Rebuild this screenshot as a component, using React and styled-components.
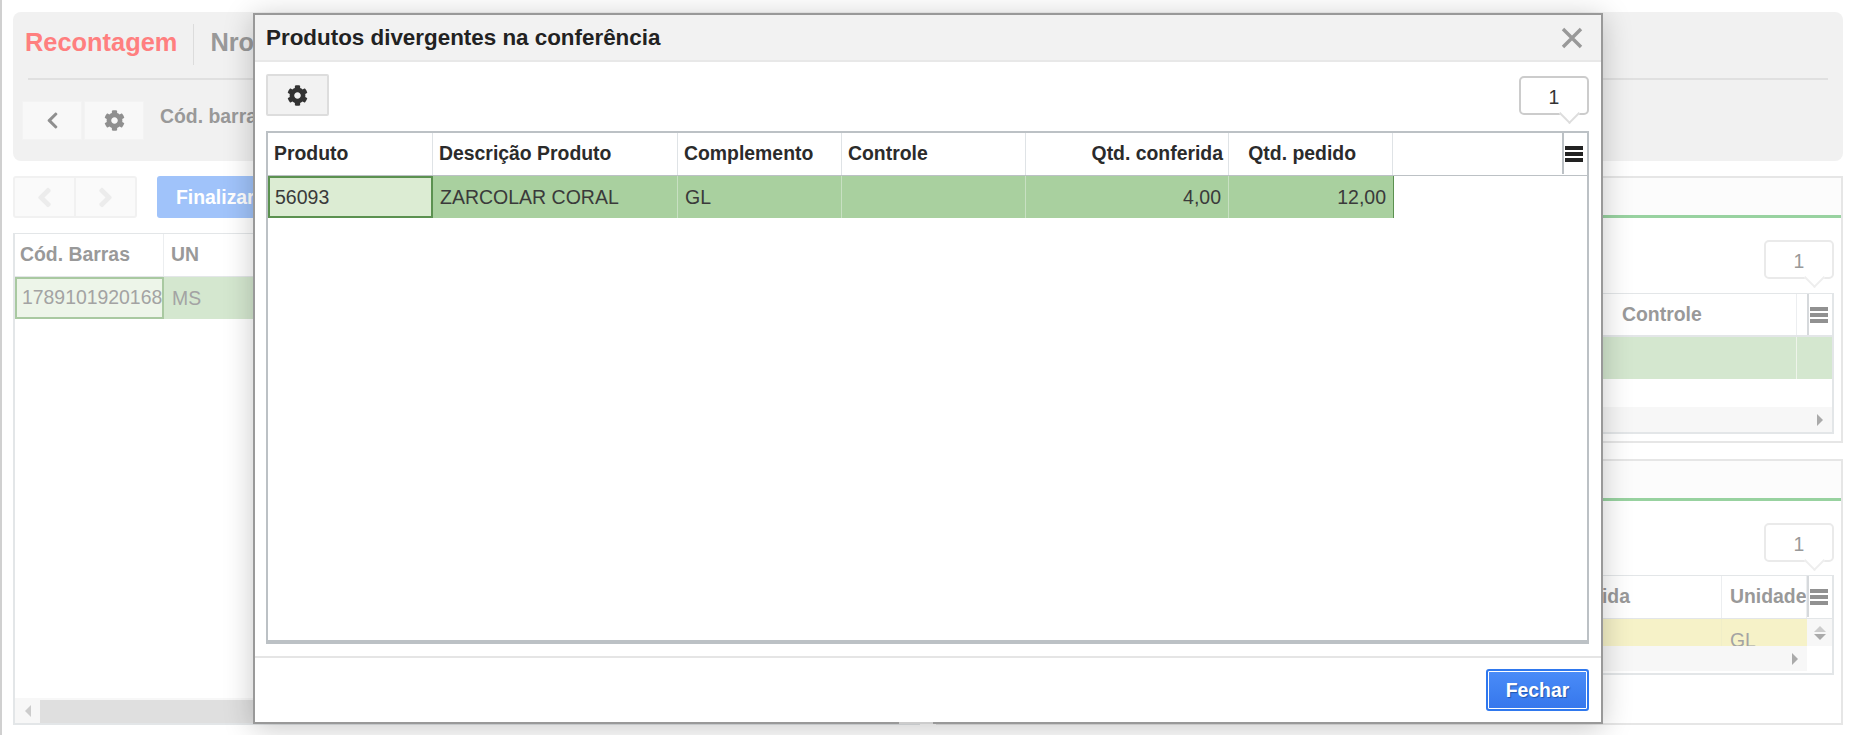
import React from 'react';
import styled, { createGlobalStyle } from 'styled-components';
import { FaCog, FaChevronLeft, FaAngleLeft, FaAngleRight } from 'react-icons/fa';

const GlobalStyle = createGlobalStyle`
  html, body { margin: 0; padding: 0; background: #fff; }
  body { font-family: "Liberation Sans", Arial, sans-serif; }
  * { box-sizing: border-box; }
`;

const Page = styled.div`
  position: relative;
  width: 1852px;
  height: 735px;
  overflow: hidden;
  border-left: 2px solid #d0d0d0;
  padding: 12px 9px 0 11px;
`;

/* background screen, faded by the modal */
const TopPanel = styled.section`
  height: 149px;
  background: #f1f1f1;
  border-radius: 8px;
  padding: 12px 15px;
`;

const TitleRow = styled.div`
  display: flex;
  align-items: center;
  border-bottom: 2px solid #e0e0e0;
  height: 56px;
  padding-bottom: 13px;
`;

const PageTitle = styled.h1`
  margin: 0 0 0 -3px;
  padding-right: 16px;
  height: 41px;
  line-height: 37px;
  font-size: 25.4px;
  font-weight: bold;
  color: #ff7f7f;
  border-right: 1px solid #dcdcdc;
`;

const PageSub = styled.span`
  margin: -4px 0 0 16px;
  font-size: 25.4px;
  font-weight: bold;
  color: #999;
`;

const TopTools = styled.div`
  display: flex;
  margin: 21px 0 0 -6px;
`;

const GhostButton = styled.div`
  display: flex;
  align-items: center;
  justify-content: center;
  width: 60px;
  height: 39px;
  margin-right: 2px;
  background: #f8f8f8;
  border: 1px solid #f3f3f3;
  color: #8f8f8f;
  font-size: 21px;
`;

const TopLabel = styled.span`
  margin: 4px 0 0 14px;
  font-size: 19.4px;
  font-weight: bold;
  color: #999;
`;

const Columns = styled.div`
  display: grid;
  grid-template-columns: 907px 907px;
  gap: 16px;
  margin-top: 15px;
  height: 549px;
`;

const LeftColumn = styled.div`
  display: flex;
  flex-direction: column;
`;

const PagerRow = styled.div`
  display: flex;
  height: 42px;
  margin-bottom: 15px;
`;

const Pager = styled.div`
  display: flex;
  width: 124px;
  height: 42px;
  border: 2px solid #f1f1f1;
  border-radius: 3px;
  background: #fafafa;
`;

const PagerButton = styled.div`
  flex: 1;
  display: flex;
  align-items: center;
  justify-content: center;
  font-size: 31px;
  color: #ececec;
  & + & { border-left: 2px solid #f1f1f1; }
`;

const FinishButton = styled.div`
  margin-left: 20px;
  width: 200px;
  padding-left: 19px;
  line-height: 42px;
  background: #a0c3fa;
  border-radius: 3px;
  color: #fff;
  font-size: 19.4px;
  font-weight: bold;
`;

const FadedTable = styled.div`
  position: relative;
  flex: ${p => (p.$grow ? 1 : 'none')};
  height: ${p => (p.$height ? `${p.$height}px` : 'auto')};
  display: flex;
  flex-direction: column;
  border: 2px solid #e3e6e8;
  border-top-width: 1px;
  overflow: hidden;
`;

const FadedHead = styled.div`
  display: flex;
  justify-content: ${p => (p.$end ? 'flex-end' : 'flex-start')};
  height: 43px;
  flex: none;
  border-bottom: ${p => (p.$thin ? 1 : 2)}px solid #e3e6e8;
`;

const FadedHeadCell = styled.div`
  flex: none;
  display: flex;
  justify-content: ${p => (p.$right ? 'flex-end' : 'flex-start')};
  width: ${p => p.$w}px;
  padding-left: ${p => p.$pad || 8}px;
  padding-right: ${p => p.$padRight || 0}px;
  line-height: 41px;
  font-size: 19.4px;
  font-weight: bold;
  color: #999;
  white-space: nowrap;
  overflow: hidden;
  border-right: 1px solid #eceef0;
`;

const MenuHandle = styled.div`
  flex: none;
  width: 25px;
  height: 41px;
  display: flex;
  align-items: center;
  padding-left: 1px;
  border-left: 2px solid #d6d9dc;
  color: #919191;
`;

const FadedRow = styled.div`
  display: flex;
  justify-content: ${p => (p.$end ? 'flex-end' : 'flex-start')};
  height: ${p => p.$h}px;
  flex: none;
  background: ${p => p.$bg};
  overflow: hidden;
`;

const FadedCell = styled.div`
  flex: none;
  width: ${p => p.$w}px;
  padding-left: 8px;
  line-height: 42px;
  font-size: 19.4px;
  color: #a3a3a3;
  white-space: nowrap;
  border-right: 1px solid ${p => p.$line || '#eef4ea'};
`;

const FadedSelected = styled(FadedCell)`
  background: #edf5e9;
  outline: 2px solid #a9c9a1;
  outline-offset: -2px;
  padding-left: 7px;
  line-height: 40px;
  overflow: hidden;
`;

const Spacer = styled.div`
  flex: ${p => (p.$w ? 'none' : 1)};
  width: ${p => (p.$w ? `${p.$w}px` : 'auto')};
`;

const ScrollBar = styled.div`
  flex: ${p => (p.$fill ? 1 : 'none')};
  display: flex;
  align-items: center;
  height: 25px;
  margin-right: ${p => p.$gutter || 0}px;
  background: #f7f7f7;
  justify-content: ${p => (p.$end ? 'flex-end' : 'flex-start')};
`;

const ScrollArrow = styled.div`
  width: 25px;
  display: flex;
  justify-content: center;
  color: #bbb;
`;

const ScrollThumb = styled.div`
  flex: 1;
  align-self: stretch;
  margin: 2px 0 0;
  background: #dfdfdf;
`;

const RightPanel = styled.section`
  display: flex;
  flex-direction: column;
  border: 2px solid #e6e6e6;
  padding-bottom: 7px;
`;

const RightHeader = styled.div`
  height: 40px;
  flex: none;
  background: #fcfcfc;
  border-bottom: 3px solid #98d2a0;
`;

const RightBody = styled.div`
  flex: 1;
  display: flex;
  flex-direction: column;
  padding: 22px 7px 0 0;
  min-height: 0;
`;

const Bubble = styled.div`
  position: relative;
  align-self: ${p => (p.$strong ? 'flex-start' : 'flex-end')};
  flex: none;
  width: 70px;
  height: 39px;
  margin-top: ${p => (p.$strong ? 2 : 0)}px;
  margin-bottom: ${p => p.$gap}px;
  border: 2px solid ${p => (p.$strong ? '#ccc' : '#eaeaea')};
  border-radius: 5px;
  background: #fff;
  text-align: center;
  line-height: 38px;
  font-size: 19.4px;
  color: ${p => (p.$strong ? '#333' : '#999')};

  &::after {
    content: '';
    position: absolute;
    right: 10px;
    bottom: -8px;
    width: 13px;
    height: 13px;
    background: #fff;
    border-right: 2px solid ${p => (p.$strong ? '#ddd' : '#eee')};
    border-bottom: 2px solid ${p => (p.$strong ? '#ddd' : '#eee')};
    transform: rotate(45deg);
  }
`;

const VerticalScroll = styled.div`
  flex: none;
  width: 25px;
  display: flex;
  flex-direction: column;
  align-items: center;
  justify-content: center;
  gap: 2px;
  background: #f7f7f7;
`;

const TriUp = styled.div`
  width: 0;
  height: 0;
  border-left: 6px solid transparent;
  border-right: 6px solid transparent;
  border-bottom: 6px solid #ccc;
`;

const TriDown = styled.div`
  width: 0;
  height: 0;
  border-left: 6px solid transparent;
  border-right: 6px solid transparent;
  border-top: 6px solid #aaa;
`;

const TriLeft = styled.div`
  width: 0;
  height: 0;
  border-top: 6px solid transparent;
  border-bottom: 6px solid transparent;
  border-right: 6px solid #ccc;
`;

const TriRight = styled.div`
  width: 0;
  height: 0;
  border-top: 6px solid transparent;
  border-bottom: 6px solid transparent;
  border-left: 6px solid #aaa;
`;

const RightStackBox = styled.div`
  display: grid;
  grid-template-rows: 267px 266px;
  gap: 16px;
  height: 549px;
  min-width: 0;
`;

const ScrollRow = styled.div`
  display: flex;
  flex: none;
  height: 25px;
`;

/* modal */
const Modal = styled.div`
  position: absolute;
  left: 251px;
  top: 13px;
  width: 1350px;
  height: 711px;
  display: flex;
  flex-direction: column;
  background: #fff;
  border: 2px solid #999;
  box-shadow: 0 4px 28px rgba(0, 0, 0, 0.22);
`;

const ModalHeader = styled.header`
  display: flex;
  align-items: center;
  justify-content: space-between;
  flex: none;
  height: 47px;
  padding: 0 18px 0 11px;
  background: #f2f2f2;
  border-bottom: 2px solid #e8e8e8;
`;

const ModalTitle = styled.h2`
  margin: 0;
  font-size: 22.4px;
  font-weight: bold;
  color: #222;
`;

const CloseIcon = styled.svg`
  width: 22px;
  height: 22px;
  display: block;
`;

const ModalBody = styled.div`
  flex: 1;
  min-height: 0;
  display: flex;
  flex-direction: column;
  padding: 12px 12px 12px 11px;
`;

const ModalTools = styled.div`
  display: flex;
  justify-content: space-between;
  flex: none;
  height: 57px;
`;

const GearButton = styled.button`
  display: flex;
  align-items: center;
  justify-content: center;
  width: 63px;
  height: 42px;
  padding: 0;
  background: #f2f2f2;
  border: 2px solid #ddd;
  border-radius: 2px;
  color: #333;
  font-size: 21px;
`;

const Table = styled.div`
  flex: 1;
  min-height: 0;
  display: flex;
  flex-direction: column;
  border: 2px solid #bcc1c5;
  border-bottom-width: 4px;
`;

const HeadRow = styled.div`
  display: flex;
  flex: none;
  height: 43px;
  border-bottom: 1px solid #bcc1c5;
`;

const HeadCell = styled.div`
  flex: none;
  width: ${p => p.$w}px;
  padding: 0 ${p => p.$padRight || 5}px 0 6px;
  line-height: 41px;
  font-size: 19.4px;
  font-weight: bold;
  color: #2b2b2b;
  white-space: nowrap;
  border-right: 1px solid #dfe3e6;
  text-align: ${p => (p.$right ? 'right' : 'left')};
`;

const HeadFill = styled.div`
  flex: 1;
`;

const HeadMenu = styled(MenuHandle)`
  border-left: 2px solid #bcc1c5;
  color: #222;
`;

const Row = styled.div`
  display: flex;
  align-self: flex-start;
  height: 42px;
  background: #a9d09f;
  border-right: 1px solid #5b9150;
`;

const Cell = styled.div`
  flex: none;
  width: ${p => p.$w}px;
  padding: 0 7px;
  line-height: 42px;
  font-size: 19.5px;
  color: #3a3a3a;
  border-right: 1px solid #c8e0c2;
  text-align: ${p => (p.$right ? 'right' : 'left')};

  &:last-child { border-right: none; }
`;

const SelectedCell = styled(Cell)`
  background: #dcecd3;
  border: 2px solid #5b9150;
  padding-left: 5px;
  line-height: 38px;
`;

const ModalFooter = styled.footer`
  display: flex;
  justify-content: flex-end;
  flex: none;
  height: 66px;
  padding: 11px 12px 0 0;
  border-top: 2px solid #e5e5e5;
`;

const CloseButton = styled.button`
  width: 103px;
  height: 42px;
  padding: 0;
  background: #3d82f5;
  background-image: linear-gradient(#4a8cf8, #3677ec);
  border: 2px solid #2f78ee;
  border-radius: 3px;
  box-shadow: inset 0 0 0 1px #fff;
  color: #fff;
  font-family: inherit;
  font-size: 19.4px;
  font-weight: bold;
  text-shadow: 1px 1px 1px #1f57b0;
`;

const ResizeGap = styled.div`
  position: absolute;
  bottom: -2px;
  left: 644px;
  width: 34px;
  height: 2px;
  background: #ccc;
`;

const Bars = () => (
  <svg width="18" height="16" viewBox="0 0 18 16" fill="currentColor">
    <rect x="0" y="0" width="18" height="4" />
    <rect x="0" y="6" width="18" height="4" />
    <rect x="0" y="12" width="18" height="4" />
  </svg>
);

const cols = [
  { label: 'Produto', w: 165 },
  { label: 'Descrição Produto', w: 245, value: 'ZARCOLAR CORAL' },
  { label: 'Complemento', w: 164, value: 'GL' },
  { label: 'Controle', w: 184, value: '' },
  { label: 'Qtd. conferida', w: 203, value: '4,00', right: true },
  { label: 'Qtd. pedido', w: 164, value: '12,00', right: true, headPad: 36 },
];

function RightStack() {
  return (
    <RightStackBox>
      <RightPanel>
        <RightHeader />
        <RightBody>
          <Bubble $gap={14}>1</Bubble>
          <FadedTable $grow>
            <FadedHead $end>
              <FadedHeadCell $w={183}>Controle</FadedHeadCell>
              <Spacer $w={10} />
              <MenuHandle><Bars /></MenuHandle>
            </FadedHead>
            <FadedRow $h={42} $end $bg="#d4e7cf">
              <FadedCell $w={183} />
              <Spacer $w={35} />
            </FadedRow>
            <Spacer />
            <ScrollBar $end>
              <ScrollArrow><TriRight /></ScrollArrow>
            </ScrollBar>
          </FadedTable>
        </RightBody>
      </RightPanel>

      <RightPanel>
        <RightHeader />
        <RightBody>
          <Bubble $gap={13}>1</Bubble>
          <FadedTable $height={100}>
            <FadedHead $end $thin>
              <FadedHeadCell $w={172} $right $padRight={91}>Qtd. válida</FadedHeadCell>
              <FadedHeadCell $w={85}>Unidade</FadedHeadCell>
              <MenuHandle><Bars /></MenuHandle>
            </FadedHead>
            <FadedRow $h={27} $end $bg="#f6f2c8">
              <FadedCell $w={172} $line="#f0eec8" />
              <FadedCell $w={85} $line="#f6f2c8">GL</FadedCell>
              <VerticalScroll><TriUp /><TriDown /></VerticalScroll>
            </FadedRow>
            <ScrollRow>
              <ScrollBar $fill $end $gutter={25}>
                <ScrollArrow><TriRight /></ScrollArrow>
              </ScrollBar>
            </ScrollRow>
          </FadedTable>
        </RightBody>
      </RightPanel>
    </RightStackBox>
  );
}

const App = () => {
  return (
    <Page>
      <GlobalStyle />

      <TopPanel>
        <TitleRow>
          <PageTitle>Recontagem</PageTitle>
          <PageSub>Nro</PageSub>
        </TitleRow>
        <TopTools>
          <GhostButton><FaChevronLeft size={19} /></GhostButton>
          <GhostButton><FaCog /></GhostButton>
          <TopLabel>Cód. barras</TopLabel>
        </TopTools>
      </TopPanel>

      <Columns>
        <LeftColumn>
          <PagerRow>
            <Pager>
              <PagerButton><FaAngleLeft /></PagerButton>
              <PagerButton><FaAngleRight /></PagerButton>
            </Pager>
            <FinishButton>Finalizar</FinishButton>
          </PagerRow>
          <FadedTable $grow>
            <FadedHead $thin>
              <FadedHeadCell $w={149} $pad={5}>Cód. Barras</FadedHeadCell>
              <FadedHeadCell $w={200} $pad={7}>UN</FadedHeadCell>
            </FadedHead>
            <FadedRow $h={42} $bg="#d4e7cf">
              <FadedSelected $w={149}>1789101920168</FadedSelected>
              <FadedCell $w={200}>MS</FadedCell>
            </FadedRow>
            <Spacer />
            <ScrollBar>
              <ScrollArrow><TriLeft /></ScrollArrow>
              <ScrollThumb />
            </ScrollBar>
          </FadedTable>
        </LeftColumn>

        <RightStack />
      </Columns>

      <Modal>
        <ModalHeader>
          <ModalTitle>Produtos divergentes na conferência</ModalTitle>
          <CloseIcon viewBox="0 0 22 22">
            <path d="M2 2 L20 20 M20 2 L2 20" stroke="#999" strokeWidth="3.4" fill="none" />
          </CloseIcon>
        </ModalHeader>
        <ModalBody>
          <ModalTools>
            <GearButton><FaCog /></GearButton>
            <Bubble $strong $gap={0}>1</Bubble>
          </ModalTools>
          <Table>
            <HeadRow>
              {cols.map(c => (
                <HeadCell key={c.label} $w={c.w} $right={c.right} $padRight={c.headPad}>{c.label}</HeadCell>
              ))}
              <HeadFill />
              <HeadMenu><Bars /></HeadMenu>
            </HeadRow>
            <Row>
              <SelectedCell $w={165}>56093</SelectedCell>
              {cols.slice(1).map(c => (
                <Cell key={c.label} $w={c.w} $right={c.right}>{c.value}</Cell>
              ))}
            </Row>
          </Table>
        </ModalBody>
        <ModalFooter>
          <CloseButton>Fechar</CloseButton>
        </ModalFooter>
        <ResizeGap />
      </Modal>
    </Page>
  );
};

export default App;
